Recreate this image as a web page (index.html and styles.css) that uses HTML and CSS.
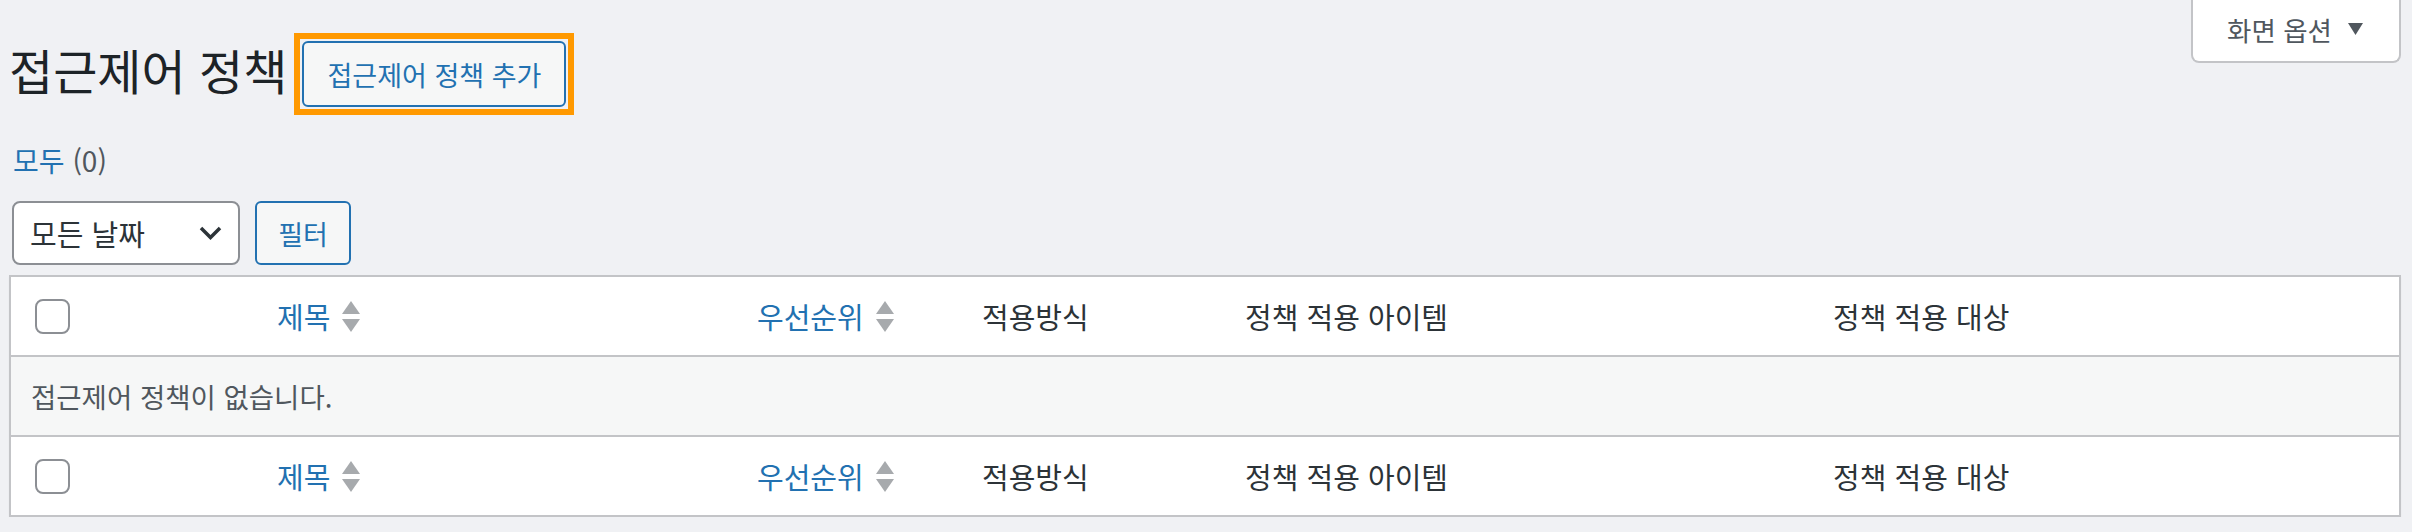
FILE: index.html
```html
<!DOCTYPE html>
<html lang="ko">
<head>
    <meta charset="UTF-8">
    <meta name="viewport" content="width=device-width, initial-scale=1.0">
    <title>접근제어 정책</title>
    <link rel="stylesheet" href="styles.css">
</head>
<body>
    <div class="wrap">
        <!-- 상단: 제목 + 화면 옵션 -->
        <div class="top">
            <div class="title-row">
                <h1>접근제어 정책</h1>
                <span class="highlight">
                    <a href="#" class="page-title-action">접근제어 정책 추가</a>
                </span>
            </div>
            <button class="screen-options">
                <span>화면 옵션</span>
                <svg width="15" height="12" viewBox="0 0 15 12"><polygon points="0,0 15,0 7.5,12" fill="currentColor"/></svg>
            </button>
        </div>

        <ul class="subsubsub">
            <li><a href="#" class="current">모두</a> <span class="count">(0)</span></li>
        </ul>

        <div class="tablenav">
            <div class="select-box">
                <span>모든 날짜</span>
                <svg width="23" height="14" viewBox="0 0 23 14"><polyline points="2,2 11.5,11.5 21,2" fill="none" stroke="currentColor" stroke-width="3.5"/></svg>
            </div>
            <button class="button">필터</button>
        </div>

        <table class="list-table">
            <colgroup>
                <col style="width: 246px">
                <col style="width: 480px">
                <col style="width: 225px">
                <col style="width: 263px">
                <col style="width: 588px">
                <col>
            </colgroup>
            <thead>
                <tr>
                    <th class="check-column"><input type="checkbox"></th>
                    <th><a href="#" class="sortable">제목 <svg class="sort-ind" width="18" height="31" viewBox="0 0 18 31"><polygon points="0,13 9,0 18,13"/><polygon points="0,18 18,18 9,31"/></svg></a></th>
                    <th><a href="#" class="sortable">우선순위 <svg class="sort-ind" width="18" height="31" viewBox="0 0 18 31"><polygon points="0,13 9,0 18,13"/><polygon points="0,18 18,18 9,31"/></svg></a></th>
                    <th>적용방식</th>
                    <th>정책 적용 아이템</th>
                    <th>정책 적용 대상</th>
                </tr>
            </thead>
            <tbody>
                <tr class="no-items">
                    <td colspan="6">접근제어 정책이 없습니다.</td>
                </tr>
            </tbody>
            <tfoot>
                <tr>
                    <th class="check-column"><input type="checkbox"></th>
                    <th><a href="#" class="sortable">제목 <svg class="sort-ind" width="18" height="31" viewBox="0 0 18 31"><polygon points="0,13 9,0 18,13"/><polygon points="0,18 18,18 9,31"/></svg></a></th>
                    <th><a href="#" class="sortable">우선순위 <svg class="sort-ind" width="18" height="31" viewBox="0 0 18 31"><polygon points="0,13 9,0 18,13"/><polygon points="0,18 18,18 9,31"/></svg></a></th>
                    <th>적용방식</th>
                    <th>정책 적용 아이템</th>
                    <th>정책 적용 대상</th>
                </tr>
            </tfoot>
        </table>
    </div>
</body>
</html>
```

FILE: styles.css
```css
/* 기본 */
body {
    margin: 0;
    background: #f0f1f4;
    color: #3c434a;
    font-family: "Noto Sans CJK KR", "Noto Sans", sans-serif;
    font-size: 26px;
}

a {
    color: #2271b1;
    text-decoration: none;
}

.wrap {
    padding: 0 11px 0 9px;
}

/* 상단 */
.top {
    display: flex;
    justify-content: space-between;
    align-items: flex-start;
}

.title-row {
    display: flex;
    align-items: flex-start;
}

.title-row h1 {
    margin: 0;
    padding: 39px 0 9px;
    font-size: 48px;
    font-weight: 400;
    line-height: 60px;
    color: #1d2327;
}

/* 강조 테두리 */
.highlight {
    display: block;
    margin: 33px 0 0 7px;
    padding: 2px;
    border: 6px solid #ff9900;
}

.page-title-action {
    width: 264px;
    height: 66px;
    box-sizing: border-box;
    display: flex;
    align-items: center;
    justify-content: center;
    border: 2px solid #2271b1;
    border-radius: 6px;
    background: #f6f7f7;
    font-size: 27px;
}

.screen-options {
    height: 63px;
    box-sizing: border-box;
    display: flex;
    align-items: center;
    gap: 16px;
    padding: 0 36px 3px 34px;
    background: #fff;
    border: 2px solid #c3c4c7;
    border-top: none;
    border-radius: 0 0 8px 8px;
    color: #50575e;
    font-family: inherit;
    font-size: 26.5px;
}

/* 필터 링크 */
.subsubsub {
    list-style: none;
    margin: 19px 0 0 4px;
    padding: 0;
    font-size: 28px;
    line-height: 52px;
    color: #50575e;
}

/* 테이블 네비 */
.tablenav {
    display: flex;
    gap: 15px;
    margin: 15px 0 10px 3px;
}

.select-box {
    width: 228px;
    height: 64px;
    box-sizing: border-box;
    display: flex;
    align-items: center;
    justify-content: space-between;
    padding: 0 16px;
    background: #fff;
    border: 2px solid #8c8f94;
    border-radius: 8px;
    color: #2c3338;
    font-size: 29px;
}

.button {
    width: 96px;
    height: 64px;
    box-sizing: border-box;
    border: 2px solid #2271b1;
    border-radius: 6px;
    background: #f6f7f7;
    color: #2271b1;
    font-family: inherit;
    font-size: 27px;
    padding: 0;
}

/* 목록 테이블 */
.list-table {
    width: 100%;
    table-layout: fixed;
    border-collapse: separate;
    border-spacing: 0;
    background: #fff;
    border: 2px solid #c3c4c7;
    box-shadow: 0 2px 2px rgba(0, 0, 0, 0.04);
}

.list-table th {
    height: 78px;
    padding: 0 20px;
    text-align: left;
    font-weight: 400;
    font-size: 29px;
    color: #2c3338;
    white-space: nowrap;
}

.list-table thead th {
    border-bottom: 2px solid #c3c4c7;
}

.list-table tfoot th {
    border-top: 2px solid #c3c4c7;
}

.list-table .check-column {
    padding: 0 0 0 24px;
}

.check-column input {
    appearance: none;
    display: block;
    margin: 0;
    width: 35px;
    height: 35px;
    box-sizing: border-box;
    border: 2px solid #8c8f94;
    border-radius: 8px;
    background: #fff;
}

.sortable {
    display: inline-flex;
    align-items: center;
    gap: 12px;
}

.sort-ind {
    fill: #a7aaad;
}

.no-items td {
    height: 78px;
    padding: 0 20px;
    background: #f6f7f7;
    color: #50575e;
    font-size: 27.5px;
}
```
